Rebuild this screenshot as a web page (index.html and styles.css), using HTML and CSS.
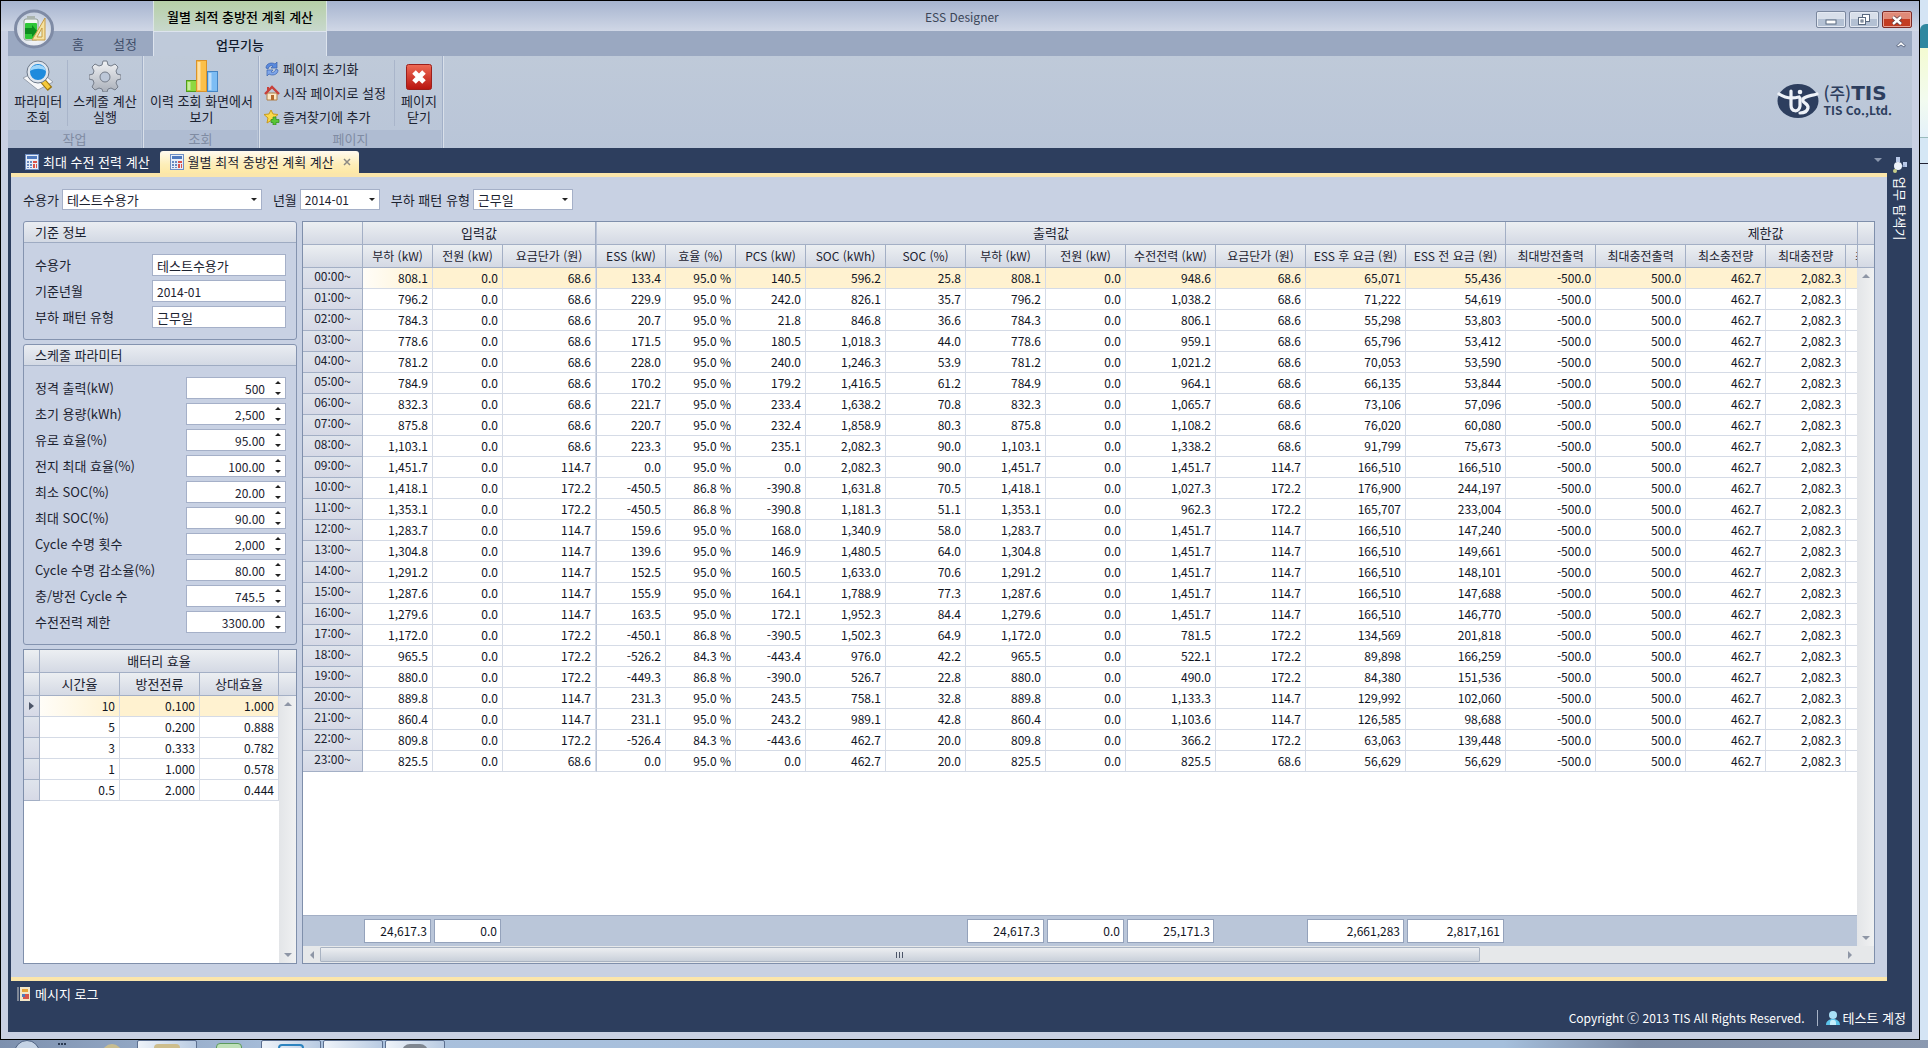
FILE: index.html
```html
<!DOCTYPE html>
<html lang="ko">
<head>
<meta charset="utf-8">
<title>ESS Designer</title>
<link rel="stylesheet" href="styles.css">
</head>
<body>
<svg class="defs" width="0" height="0" aria-hidden="true">
  <symbol id="calc" viewBox="0 0 14 16">
    <rect x=".5" y=".5" width="13" height="15" fill="#e8eef8" stroke="#6f8fc4"/>
    <rect x="2" y="2" width="10" height="3" fill="#4f79bd"/>
    <path d="M2 7h2v2H2zM5 7h2v2H5zM2 10h2v2H2zM5 10h2v2H5zM2 13h2v1H2zM5 13h2v1H5z" fill="#6a8ac0"/>
    <path d="M8 7h4v2H8zM8 10h2v4H8zM11 10h1v4h-1z" fill="#d9534a"/>
  </symbol>
</svg>
<div class="desktop">
  <div class="window">
    <header class="head">
      <div class="titlebar">
        <div class="context">월별 최적 충방전 계획 계산</div>
        <h1>ESS Designer</h1>
        <div class="winbtns">
          <button aria-label="최소화"><svg width="14" height="14" viewBox="0 0 14 14"><rect x="2" y="7" width="10" height="4" fill="#fff" stroke="#5b6a80"/></svg></button>
          <button aria-label="이전 크기로"><svg width="14" height="14" viewBox="0 0 14 14"><g fill="#fff" stroke="#5b6a80"><rect x="5.500" y="1.500" width="7" height="7"/><rect x="1.500" y="4.500" width="7" height="7"/><rect x="4" y="7" width="2" height="2"/></g></svg></button>
          <button class="close" aria-label="닫기"><svg width="14" height="14" viewBox="0 0 14 14"><path d="M3 4l8 7M11 4l-8 7" stroke="#5c3a40" stroke-width="4"/><path d="M3 4l8 7M11 4l-8 7" stroke="#fff" stroke-width="2.400"/></svg></button>
        </div>
      </div>
      <nav class="strip">
        <a href="#">홈</a><a href="#">설정</a><a href="#" class="on">업무기능</a>
        <button class="fold" aria-label="리본 접기"><svg width="12" height="8" viewBox="0 0 12 8"><path d="M1.500 6L6 1.500 10.500 6 9 7 6 5 3 7z" fill="#fff" stroke="#5d6a84"/></svg></button>
      </nav>
      <button class="orb" aria-label="메뉴">
        <svg width="40" height="42" viewBox="0 0 40 42">
          <defs><radialGradient id="ob" cx=".5" cy=".7" r=".6"><stop offset="0" stop-color="#fff"/><stop offset="1" stop-color="#c9d2e0"/></radialGradient></defs>
          <ellipse cx="20" cy="20" rx="18.500" ry="18" fill="url(#ob)" stroke="#7f8ba5" stroke-width="3"/>
          <rect x="10" y="10" width="14" height="21" rx="2" fill="#f3f7f3" stroke="#8c9a90"/>
          <rect x="13" y="7" width="8" height="3" fill="#aab4ae"/>
          <rect x="11" y="14" width="12" height="16" rx="1" fill="#2fc738"/>
          <path d="M11 19h7v-3l5 6-5 6v-3h-7z" fill="#0d8c1e"/>
          <path d="M31 9v22H18z" fill="#f5e2a0" stroke="#c79c45"/><path d="M28 19v9h-5z" fill="#e7f0dc" stroke="#c79c45"/>
        </svg>
      </button>
    </header>
    <section class="ribbon">
      <div class="group g1">
        <div class="items">
          <button class="big"><svg width="32" height="32" viewBox="0 0 32 32"><path d="M1 18l16-8 14 12-15 8z" fill="#f6f7f9" stroke="#97a0ad"/><path d="M20 20l8 9" stroke="#9a7410" stroke-width="6"/><path d="M21 21l6 7" stroke="#f5c93a" stroke-width="4"/><circle cx="16" cy="12" r="9.500" fill="#1e8bdd" stroke="#dfe6ee" stroke-width="3"/><circle cx="16" cy="12" r="11" fill="none" stroke="#6c7888"/><path d="M8 11c1-8 15-8 16 0-4-3-11-3-16 0z" fill="#9fd6fa"/></svg><span>파라미터<br>조회</span></button>
          <button class="big"><svg width="32" height="32" viewBox="0 0 32 32"><defs><linearGradient id="gg" x2="0" y2="1"><stop offset="0" stop-color="#f2f3f5"/><stop offset="1" stop-color="#a9afb9"/></linearGradient></defs><path d="M14 1h4l1 4 3 1 4-2 3 3-2 4 1 3 4 1v4l-4 1-1 3 2 4-3 3-4-2-3 1-1 3h-4l-1-3-3-1-4 2-3-3 2-4-1-3-4-1v-4l4-1 1-3-2-4 3-3 4 2 3-1z" fill="url(#gg)" stroke="#757d8a"/><circle cx="16" cy="17" r="5" fill="#bcc7d8" stroke="#757d8a"/></svg><span>스케줄 계산<br>실행</span></button>
        </div>
        <div class="cap">작업</div>
      </div>
      <div class="group g2">
        <div class="items">
          <button class="big"><svg width="32" height="32" viewBox="0 0 32 32"><rect x=".5" y="20.500" width="10" height="11" fill="#8fd840" stroke="#4f9a1c"/><rect x="10.500" y=".5" width="10" height="31" fill="#fcc04a" stroke="#d9922a"/><rect x="21.500" y="11.500" width="10" height="20" fill="#7dbdf4" stroke="#4585c4"/><path d="M13 2v28M24 13v17M3 22v8" stroke="#fff" stroke-opacity=".5" stroke-width="3"/></svg><span>이력 조회 화면에서<br>보기</span></button>
        </div>
        <div class="cap">조회</div>
      </div>
      <div class="group g3">
        <div class="items">
          <div class="small">
            <button><svg width="16" height="16" viewBox="0 0 16 16"><path d="M2 7c0-5 6-6 9-4l2-2v6H7l2-2C7 4 5 5 4 8z" fill="#5a8ade" stroke="#3a62ae" stroke-width=".7"/><path d="M14 9c0 5-6 6-9 4l-2 2V9h6l-2 2c2 1 4 0 5-3z" fill="#7ea6ea" stroke="#3a62ae" stroke-width=".7"/></svg>페이지 초기화</button>
            <button><svg width="16" height="16" viewBox="0 0 16 16"><path d="M3 8h10v7H3z" fill="#fbe9c8" stroke="#b07c44"/><path d="M1 9l7-7 7 7" fill="none" stroke="#c8403a" stroke-width="2.400"/><path d="M7 10h3v5H7z" fill="#b66a2c"/><path d="M3 2h2v3L3 6z" fill="#c8403a"/></svg>시작 페이지로 설정</button>
            <button><svg width="16" height="16" viewBox="0 0 16 16"><path d="M7 1l2 4 5 .5-4 3.500 1 5-4-2.500L3 14l1-5-4-3.500L5 5z" fill="#fbd94a" stroke="#c99a1e"/><path d="M9 8h3v2.500h3v3h-3V16H9v-2.500H7v-3h2z" fill="#58c636" stroke="#2f8a1c" stroke-width=".7"/></svg>즐겨찾기에 추가</button>
          </div>
          <button class="big"><svg width="32" height="32" viewBox="0 0 32 32"><defs><linearGradient id="rd" x2="0" y2="1"><stop offset="0" stop-color="#ee6a55"/><stop offset="1" stop-color="#b8140f"/></linearGradient></defs><rect x="3.500" y="4.500" width="25" height="25" rx="2" fill="url(#rd)" stroke="#9c1f1b"/><path d="M11 12l10 10M21 12L11 22" stroke="#fff" stroke-width="5"/></svg><span>페이지<br>닫기</span></button>
        </div>
        <div class="cap">페이지</div>
      </div>
      <div class="logo">
        <svg width="42" height="36" viewBox="0 0 42 36"><ellipse cx="21" cy="18" rx="20.500" ry="17" fill="#2d3e5e"/><g fill="none" stroke="#eef2f8" stroke-width="3.200" stroke-linecap="round"><path d="M2 11c6 4 12 5 20 3"/><path d="M14 8v14c0 7 8 8 9 1V15"/><path d="M40 11c-7 2-12 2-14 5-2 4 6 4 5 9-1 4-5 5-8 5"/></g><circle cx="23" cy="9" r="2.300" fill="#eef2f8"/></svg>
        <div><b><i>(주)</i>TIS</b><small>TIS Co.,Ltd.</small></div>
      </div>
    </section>
    <div class="work">
      <div class="docs">
        <div class="doctabs">
          <button><svg width="14" height="16"><use href="#calc"/></svg>최대 수전 전력 계산</button>
          <button class="on"><svg width="14" height="16"><use href="#calc"/></svg>월별 최적 충방전 계획 계산<svg class="x" width="8" height="8" viewBox="0 0 8 8"><path d="M1 1l6 6M7 1L1 7" stroke="#8c8a84" stroke-width="1.500"/></svg></button>
          <svg class="more" width="8" height="5" viewBox="0 0 8 5"><path d="M0 0h8L4 4z" fill="#8b97ae"/></svg>
        </div>
        <main class="page">
          <form class="filter">
            <label for="f1">수용가</label><select id="f1" class="w1"><option>테스트수용가</option></select>
            <label for="f2">년월</label><select id="f2" class="w2"><option>2014-01</option></select>
            <label for="f3">부하 패턴 유형</label><select id="f3" class="w3"><option>근무일</option></select>
          </form>
          <div class="cols">
            <aside class="left">
              <section class="panel">
                <h2>기준 정보</h2>
                <div class="fields">
                  <label for="a1">수용가</label><input id="a1" value="테스트수용가">
                  <label for="a2">기준년월</label><input id="a2" value="2014-01">
                  <label for="a3">부하 패턴 유형</label><input id="a3" value="근무일">
                </div>
              </section>
              <section class="panel">
                <h2>스케줄 파라미터</h2>
                <div class="fields nums">
                  <label for="b1">정격 출력(kW)</label><input id="b1" value="500">
                  <label for="b2">초기 용량(kWh)</label><input id="b2" value="2,500">
                  <label for="b3">유로 효율(%)</label><input id="b3" value="95.00">
                  <label for="b4">전지 최대 효율(%)</label><input id="b4" value="100.00">
                  <label for="b5">최소 SOC(%)</label><input id="b5" value="20.00">
                  <label for="b6">최대 SOC(%)</label><input id="b6" value="90.00">
                  <label for="b7">Cycle 수명 횟수</label><input id="b7" value="2,000">
                  <label for="b8">Cycle 수명 감소율(%)</label><input id="b8" value="80.00">
                  <label for="b9">충/방전 Cycle 수</label><input id="b9" value="745.5">
                  <label for="b10">수전전력 제한</label><input id="b10" value="3300.00">
                </div>
              </section>
              <section class="grid battery">
                <div class="view">
                  <table>
                    <colgroup><col class="c16"><col class="c80"><col class="c80"><col></colgroup>
                    <thead>
                      <tr><th></th><th colspan="3">배터리 효율</th></tr>
                      <tr><th></th><th>시간율</th><th>방전전류</th><th>상대효율</th></tr>
                    </thead>
                    <tbody>
                      <tr><th><svg width="5" height="8" viewBox="0 0 5 8"><path d="M0 0l5 4-5 4z" fill="#4c5568"/></svg></th><td>10</td><td>0.100</td><td>1.000</td></tr>
                      <tr><th></th><td>5</td><td>0.200</td><td>0.888</td></tr>
                      <tr><th></th><td>3</td><td>0.333</td><td>0.782</td></tr>
                      <tr><th></th><td>1</td><td>1.000</td><td>0.578</td></tr>
                      <tr><th></th><td>0.5</td><td>2.000</td><td>0.444</td></tr>
                    </tbody>
                  </table>
                </div>
                <div class="vbar"><i></i><i></i><span class="up"></span><span class="down"></span></div>
              </section>
            </aside>
            <section class="grid result">
              <div class="view">
                <table>
                  <colgroup class="rc"></colgroup>
                  <thead>
                    <tr><th></th><th colspan="3">입력값</th><th colspan="11" class="split">출력값</th><th colspan="6">제한값</th></tr>
                    <tr><th></th><th>부하 (kW)</th><th>전원 (kW)</th><th>요금단가 (원)</th><th class="split">ESS (kW)</th><th>효율 (%)</th><th>PCS (kW)</th><th>SOC (kWh)</th><th>SOC (%)</th><th>부하 (kW)</th><th>전원 (kW)</th><th>수전전력 (kW)</th><th>요금단가 (원)</th><th>ESS 후 요금 (원)</th><th>ESS 전 요금 (원)</th><th>최대방전출력</th><th>최대충전출력</th><th>최소충전량</th><th>최대충전량</th><th class="cut">최</th><th></th></tr>
                  </thead>
                  <tbody id="rows"></tbody>
                </table>
              </div>
              <div class="sum">
                <table>
                  <colgroup class="rc"></colgroup>
                  <tr><td></td><td><output>24,617.3</output></td><td><output>0.0</output></td><td colspan="6"></td><td><output>24,617.3</output></td><td><output>0.0</output></td><td><output>25,171.3</output></td><td></td><td><output>2,661,283</output></td><td><output>2,817,161</output></td><td colspan="6"></td></tr>
                </table>
              </div>
              <div class="vbar"><i></i><i></i><span class="up"></span><span class="down"></span></div>
              <div class="hbar"><span class="prev"></span><div class="track"><div class="thumb"><svg width="7" height="6" viewBox="0 0 7 6"><path d="M.5 0v6M3.500 0v6M6.500 0v6" stroke="#4c5568"/></svg></div></div><span class="next"></span></div>
            </section>
          </div>
        </main>
      </div>
      <aside class="side">
        <svg width="16" height="16" viewBox="0 0 16 16"><path d="M4 0h4v5H4zM11 5h4v5h-4z" fill="#b9c9e8"/><path d="M6 5v4h7" stroke="#8ea2c6" fill="none"/><circle cx="6" cy="9" r="4" fill="#eef3fa"/><circle cx="3" cy="14" r="2" fill="#c8cf8a"/></svg>
        <button>업무 탐색기</button>
      </aside>
    </div>
    <footer class="foot">
      <button class="log"><svg width="14" height="16" viewBox="0 0 14 16"><path d="M0 1h2v14H0z" fill="#7f8796"/><rect x="3" y="1" width="10" height="14" fill="#f1e6c8"/><path d="M5 3h6v3H5z" fill="#e8a33a"/><path d="M5 8h3v3H5z" fill="#4f79bd"/><path d="M8 8h4v5H6v-2h2z" fill="#d9534a"/></svg>메시지 로그</button>
      <div class="status"><span>Copyright ⓒ 2013 TIS All Rights Reserved.</span><a href="#"><svg width="16" height="16" viewBox="0 0 16 16"><path d="M1 15c0-4 3-5 5-6h4c2 1 5 2 5 6z" fill="#5cc3ea"/><path d="M5 15c0-4 0-5 3-5s3 1 3 5z" fill="#c6eefb"/><circle cx="8" cy="5" r="4" fill="#a9e0f6"/></svg>테스트 계정</a></div>
    </footer>
  </div>
  <div class="behind"><i></i><b></b><u></u></div>
</div>
<div class="taskbar"><span class="start"></span><span class="dots"></span><span class="app y"></span><span class="btn"><i class="y"></i></span><span class="app g"></span><span class="btn"><i class="b"></i></span><span class="btn"></span><span class="btn"><i class="k"></i></span></div>
<script src="grid.js"></script>
</body>
</html>
```
FILE: grid.js
```js
// Column widths of the result grid, shared by the body and the summary row.
const widths = [60, 70, 70, 93, 70, 70, 70, 80, 80, 80, 80, 90, 90, 100, 100, 90, 90, 80, 80, 90, 90];
document.querySelectorAll('.rc').forEach(g => {
  g.innerHTML = widths.map(w => `<col style="width:${w}px">`).join('');
});

// load | unit price | ESS | efficiency | PCS | SOC kWh | SOC % | received | cost after | cost before
const hours = `
808.1|68.6|133.4|95.0|140.5|596.2|25.8|948.6|65,071|55,436
796.2|68.6|229.9|95.0|242.0|826.1|35.7|1,038.2|71,222|54,619
784.3|68.6|20.7|95.0|21.8|846.8|36.6|806.1|55,298|53,803
778.6|68.6|171.5|95.0|180.5|1,018.3|44.0|959.1|65,796|53,412
781.2|68.6|228.0|95.0|240.0|1,246.3|53.9|1,021.2|70,053|53,590
784.9|68.6|170.2|95.0|179.2|1,416.5|61.2|964.1|66,135|53,844
832.3|68.6|221.7|95.0|233.4|1,638.2|70.8|1,065.7|73,106|57,096
875.8|68.6|220.7|95.0|232.4|1,858.9|80.3|1,108.2|76,020|60,080
1,103.1|68.6|223.3|95.0|235.1|2,082.3|90.0|1,338.2|91,799|75,673
1,451.7|114.7|0.0|95.0|0.0|2,082.3|90.0|1,451.7|166,510|166,510
1,418.1|172.2|-450.5|86.8|-390.8|1,631.8|70.5|1,027.3|176,900|244,197
1,353.1|172.2|-450.5|86.8|-390.8|1,181.3|51.1|962.3|165,707|233,004
1,283.7|114.7|159.6|95.0|168.0|1,340.9|58.0|1,451.7|166,510|147,240
1,304.8|114.7|139.6|95.0|146.9|1,480.5|64.0|1,451.7|166,510|149,661
1,291.2|114.7|152.5|95.0|160.5|1,633.0|70.6|1,451.7|166,510|148,101
1,287.6|114.7|155.9|95.0|164.1|1,788.9|77.3|1,451.7|166,510|147,688
1,279.6|114.7|163.5|95.0|172.1|1,952.3|84.4|1,451.7|166,510|146,770
1,172.0|172.2|-450.1|86.8|-390.5|1,502.3|64.9|781.5|134,569|201,818
965.5|172.2|-526.2|84.3|-443.4|976.0|42.2|522.1|89,898|166,259
880.0|172.2|-449.3|86.8|-390.0|526.7|22.8|490.0|84,380|151,536
889.8|114.7|231.3|95.0|243.5|758.1|32.8|1,133.3|129,992|102,060
860.4|114.7|231.1|95.0|243.2|989.1|42.8|1,103.6|126,585|98,688
809.8|172.2|-526.4|84.3|-443.6|462.7|20.0|366.2|63,063|139,448
825.5|68.6|0.0|95.0|0.0|462.7|20.0|825.5|56,629|56,629`.trim().split('\n');

document.getElementById('rows').innerHTML = hours.map((line, h) => {
  const [load, price, ess, eff, pcs, soc, pct, recv, after, before] = line.split('|');
  const cells = [load, '0.0', price, ess, eff + ' %', pcs, soc, pct, load, '0.0', recv, price,
    after, before, '-500.0', '500.0', '462.7', '2,082.3', '', ''];
  return `<tr><th>${String(h).padStart(2, '0')}:00~</th>` +
    cells.map((c, i) => `<td${i === 3 ? ' class="split"' : ''}>${c}</td>`).join('') + '</tr>';
}).join('');
```
FILE: styles.css
```css
* { box-sizing: border-box; }
html, body { height: 100%; margin: 0; }
body {
  display: flex; flex-direction: column; overflow: hidden; background: #000;
  font: 13px/16px "Noto Sans CJK KR", "Noto Sans", sans-serif; color: #1b2230;
}
button, input, select { font: inherit; color: inherit; margin: 0; padding: 0; border: 0; background: none; border-radius: 0; }
a { color: inherit; text-decoration: none; }
svg { display: block; flex: none; }
.defs { position: absolute; }

.desktop { flex: 1; min-height: 0; display: flex; }
.window {
  flex: 1; min-width: 0; display: flex; flex-direction: column;
  margin: 1px; padding: 0 7px 7px; background: #c9d0e3;
}
.behind { width: 8px; display: flex; flex-direction: column; background: #d4e4f4; padding-top: 24px; }
.behind i { height: 24px; background: #2f88a0; border-radius: 6px 0 0 0; }
.behind b { height: 90px; background: linear-gradient(#f4fbd2, #f2fbf0 60%, #e4f1fa); border-bottom: 1px solid #9bb; }
.behind u { height: 26px; background: #d5e7f5; border-bottom: 1px solid #223; }

/* title bar and ribbon tabs */
.head { position: relative; margin: 0 -7px; background: #c9d0e3; }
.titlebar {
  height: 30px; display: grid; grid-template-columns: 152px 174px 1fr auto; align-items: start;
  background: linear-gradient(#a6b4cf, #d0d7e6);
}
.context {
  grid-column: 2; height: 30px; padding-top: 8px; text-align: center; font-weight: 500; color: #000;
  background: linear-gradient(#b5cfa6, #c8d8cd); border: solid #dbe5e3; border-width: 0 1px;
}
.titlebar h1 { margin: 0; padding: 8px 0 0 598px; font-size: 12px; font-weight: 400; color: #3c4658; }
.winbtns { display: flex; gap: 3px; padding: 10px 7px 0 0; }
.winbtns button {
  width: 30px; height: 17px; display: grid; place-items: center; border: 1px solid #7a879e; border-radius: 2px;
  background: linear-gradient(#d8dfea 50%, #b3c0d3 50%); box-shadow: inset 0 0 0 1px #e4e9f2;
}
.winbtns .close { background: linear-gradient(#e08a78 50%, #c33c22 50%); border-color: #7c2a26; box-shadow: inset 0 0 0 1px #e9a294; }
.strip {
  height: 25px; margin: 0 7px; display: grid; grid-template-columns: 52px 36px 57px 174px 1fr;
  align-items: center; background: #9aa8c1; color: #404e69;
}
.strip a:nth-child(1) { grid-column: 2; text-align: center; }
.strip a:nth-child(2) { text-align: right; padding-right: 16px; }
.strip .on { height: 25px; line-height: 25px; text-align: center; background: #bfcada; border: solid #dde4ee; border-width: 1px 1px 0; color: #111a2c; font-weight: 500; }
.fold { justify-self: end; padding-right: 5px; }
.orb { position: absolute; left: 13px; top: 8px; }

.ribbon { display: flex; height: 92px; background: linear-gradient(#bfcad9, #b9c5d8); }
.group { display: flex; flex-direction: column; border-right: 1px solid #d9e0ea; box-shadow: inset -1px 0 #a2b0c8; }
.g1 { width: 136px; } .g2 { width: 116px; } .g3 { width: 184px; }
.items { flex: 1; display: flex; justify-content: center; padding-top: 4px; }
.cap { height: 18px; text-align: center; color: #7f8ba2; background: #afbcd2; margin-right: 2px; line-height: 18px; }
.big { display: flex; flex-direction: column; align-items: center; justify-content: flex-start; gap: 1px; line-height: 16px; white-space: nowrap; padding: 0 5px; }
.big + .big, .small + .big { border-left: 1px solid #a9b5ca; height: 66px; }
.small + .big { padding-left: 6px; }
.small { display: flex; flex-direction: column; gap: 8px; padding: 1px 8px 0 3px; }
.small button { display: flex; align-items: center; gap: 3px; height: 16px; white-space: nowrap; }
.logo { margin-left: auto; padding: 27px 20px 0 0; display: flex; gap: 4px; color: #2d3e5e; height: 66px; }
.logo div { display: flex; flex-direction: column; }
.logo b { font: 700 20px/20px "DejaVu Sans", sans-serif; }
.logo i { font: 500 17px/20px "Noto Sans CJK KR", sans-serif; }
.logo small { font: 700 12px/13px "Noto Sans CJK KR", sans-serif; }

/* document area */
.work { flex: 1; min-height: 0; display: flex; background: #2d3e5e; }
.docs { flex: 1; min-width: 0; display: flex; flex-direction: column; padding-left: 3px; }
.doctabs { display: flex; align-items: flex-end; height: 25px; padding-left: 4px; }
.doctabs button { display: flex; align-items: center; gap: 4px; height: 22px; padding: 0 10px; color: #fff; white-space: nowrap; }
.doctabs .on { color: #1b2230; background: linear-gradient(#fffaf0, #fdeeb9 60%, #fde8a6); border-radius: 3px 3px 0 0; padding-right: 8px; }
.doctabs .x { margin-left: 5px; }
.doctabs .more { margin: 0 5px 10px auto; }
.page {
  flex: 1; min-height: 0; display: flex; flex-direction: column; padding: 12px 12px 13px;
  border: solid #fbe6ab; border-width: 4px 0; background: #c8d1e3;
}
.filter { display: flex; align-items: center; height: 21px; margin-bottom: 11px; }
.filter select {
  appearance: none; height: 21px; margin: 0 11px 0 3px; padding: 0 4px; border: 1px solid #a5b0c8;
  background: #fff url("data:image/svg+xml,%3Csvg xmlns='http://www.w3.org/2000/svg' width='6' height='4'%3E%3Cpath d='M0 0h6L3 3z' fill='%23222'/%3E%3C/svg%3E") no-repeat right 4px center;
}
.w1 { width: 200px; } .w2 { width: 80px; } .w3 { width: 100px; }
.filter #f2, .fields #a2 { font-size: 12px; }
.cols { flex: 1; min-height: 0; display: flex; gap: 5px; }
.left { width: 274px; display: flex; flex-direction: column; gap: 4px; }
.panel { border: 1px solid #8493af; border-radius: 3px; }
.panel h2 {
  margin: 0; height: 21px; padding-left: 11px; font-size: 13px; line-height: 19px; font-weight: 400;
  border-bottom: 1px solid #9eabc2; background: linear-gradient(#eaedf2, #d3d9e4); border-radius: 3px 3px 0 0;
}
.fields { display: grid; grid-template-columns: 1fr 134px; row-gap: 4px; align-items: center; padding: 11px 10px 11px 11px; }
.fields label { white-space: nowrap; }
.fields input { width: 100%; height: 22px; padding: 0 4px; border: 1px solid #a5b0c8; background: #fff; }
.nums { grid-template-columns: 1fr 100px; }
.nums input {
  text-align: right; padding-right: 20px; font-size: 12px;
  background: #fff url("data:image/svg+xml,%3Csvg xmlns='http://www.w3.org/2000/svg' width='6' height='14'%3E%3Cpath d='M0 3h6L3 0zM0 11h6L3 14z' fill='%23222'/%3E%3C/svg%3E") no-repeat right 4px center;
}

/* data grids */
.grid { display: grid; border: 1px solid #7f8fab; background: #fff; min-width: 0; min-height: 0; }
.battery { flex: 1; grid-template: 1fr / 1fr 17px; }
.result { flex: 1; grid-template: 1fr 31px 17px / 1fr 17px; }
.view { overflow: hidden; min-width: 0; min-height: 0; }
table { table-layout: fixed; border-collapse: separate; border-spacing: 0; width: 100%; font-size: 12px; }
.result table { width: 1723px; }
.c16 { width: 16px; } .c80 { width: 80px; }
th, td { padding: 0; white-space: nowrap; overflow: hidden; }
th { font-weight: 400; border: solid #a3afc5; border-width: 0 1px 1px 0; }
thead th { height: 23px; line-height: 22px; background: linear-gradient(#eceff2, #d4d9e4); font-size: 12px; }
thead tr:first-child th { font-size: 13px; }
.battery thead th { font-size: 13px; }
tbody th { height: 21px; line-height: 16px; padding-bottom: 4px; background: linear-gradient(#dfe4ec, #d6d9e6); }
tbody th svg { margin: 4px auto 0; }
tbody td { height: 21px; padding-right: 4px; line-height: 20px; text-align: right; border: solid #d5dbe6; border-width: 0 1px 1px 0; color: #10151f; }
.view tbody tr:first-child td { background: #fff2d0; }
.view tbody tr:first-child td:nth-child(2) { background: linear-gradient(90deg, #fffdf8, #fff2d0); }
.view .split { border-left: 1px solid #b9c3d6; }
.view .cut { text-align: left; padding-left: 9px; }
.vbar {
  grid-column: 2; grid-row: 1 / 3; display: flex; flex-direction: column; align-items: center;
  background: linear-gradient(90deg, #e3e5e8, #f0f1f2);
}
.battery .vbar { grid-row: 1; }
.vbar i { width: 100%; height: 23px; border-bottom: 1px solid #a3afc5; background: linear-gradient(#eceff2, #d4d9e4); }
.result .vbar i { border-left: 1px solid #a3afc5; }
.vbar span, .hbar span { width: 0; height: 0; border: 4px solid transparent; }
.vbar .up { border-bottom-color: #8e96a6; margin-top: 2px; }
.vbar .down { border-top-color: #8e96a6; margin: auto 0 2px; }
.sum { grid-column: 1; grid-row: 2; overflow: hidden; min-width: 0; background: #bac6d9; border-top: 1px solid #a3afc5; padding-top: 3px; }
.sum td { height: 24px; padding: 0 2px 0 1px; border: 0; vertical-align: middle; }
.sum output { display: block; height: 24px; padding-right: 3px; line-height: 22px; background: #fff; border: 1px solid #94a2bb; }
.hbar { grid-column: 1 / 3; grid-row: 3; display: flex; align-items: center; background: #e6e8ea; padding: 0 18px 0 3px; }
.hbar .prev { border-right-color: #8e96a6; }
.hbar .next { border-left-color: #8e96a6; }
.track { flex: 1; padding: 0 2px 0 6px; }
.thumb { width: 76%; min-width: 40px; height: 15px; display: grid; place-items: center; border: 1px solid #a9b3c2; background: linear-gradient(#eceef1, #c9d0da); border-radius: 1px; }

.side { width: 25px; display: flex; flex-direction: column; align-items: center; padding-top: 9px; gap: 4px; color: #fff; }
.side button { writing-mode: vertical-rl; text-orientation: sideways; white-space: nowrap; }

/* status area */
.foot { height: 51px; display: flex; flex-direction: column; justify-content: space-between; background: #2d3e5e; color: #fff; padding: 5px 6px 6px 9px; }
.foot .log, .foot a { display: flex; align-items: center; gap: 4px; }
.foot .log { align-self: flex-start; }
.status { display: flex; align-self: flex-end; gap: 12px; align-items: center; font-size: 12px; }
.foot a { font-size: 13px; gap: 2px; padding-left: 7px; border-left: 1px solid #a7b2c6; }

.taskbar { height: 8px; display: flex; align-items: flex-start; overflow: hidden; background: linear-gradient(90deg, #7d90ae, #a9c0dc 15%, #a5bfdc 78%, #7c8ca6 85%, #8b99b0); }
.start { width: 26px; height: 26px; border-radius: 13px; margin-left: 14px; background: #c4d2e4; border: 1px solid #4b5f80; flex: none; }
.dots { width: 8px; margin: 3px 6px 0 18px; border-top: 2px dotted #2b3a52; }
.app { width: 26px; height: 20px; flex: none; border-radius: 4px; }
.app.y { width: 20px; margin: 4px 15px 0 30px; border-radius: 10px; background: #c8bd90; }
.app.g { background: #bfe0b8; border: 1px solid #5c9a5c; margin: 3px 19px 0 17px; }
.btn { width: 60px; height: 20px; flex: none; margin-right: 2px; padding: 3px 16px; background: linear-gradient(90deg, #eef3f9, #b9cbe2); border: 1px solid #5c6f8f; border-radius: 2px; }
.btn i { display: block; height: 16px; border-radius: 4px; }
.btn .y { background: #cdbd8c; } .btn .b { border: 2px solid #2c83bf; } .btn .k { background: #7f8690; border-radius: 10px; }
```
